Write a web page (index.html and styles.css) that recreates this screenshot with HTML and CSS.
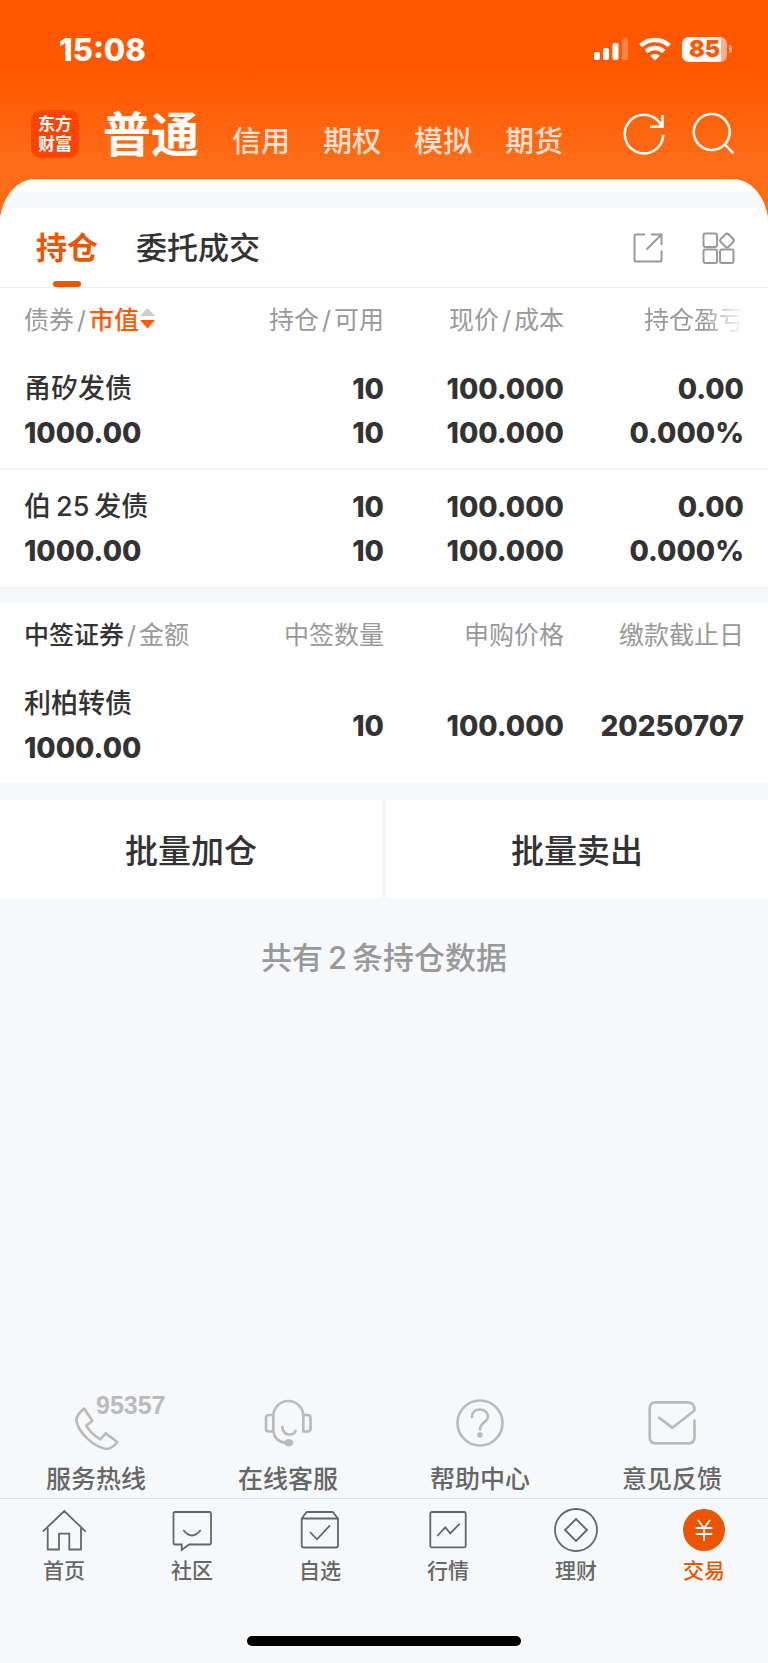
FILE: index.html
```html
<!DOCTYPE html>
<html lang="zh-CN">
<head>
<meta charset="utf-8">
<meta name="viewport" content="width=device-width, initial-scale=1">
<title>交易 - 持仓</title>
<link rel="stylesheet" href="styles.css">
</head>
<body>
<header class="top">
  <div class="status">
    <time class="clock">15:08</time>
    <div class="status-icons">
      <svg class="signal" viewBox="0 0 34 24" aria-hidden="true"><g fill="#fff"><rect x="0" y="15" width="6" height="8" rx="2"/><rect x="9" y="11" width="6" height="12" rx="2"/><rect x="18.500" y="6" width="6" height="17" rx="2"/><rect x="28" y="1" width="6" height="22" rx="2" opacity=".25"/></g></svg>
      <svg class="wifi" viewBox="0 0 32 24" aria-hidden="true"><g fill="none" stroke="#fff" stroke-width="4.500"><path d="M1.800 8.600A20.500 20.500 0 0 1 30.200 8.600"/><path d="M7.200 14.500A13 13 0 0 1 24.800 14.500"/></g><path d="M16 23.500L11.300 18.800A6.600 6.600 0 0 1 20.700 18.800Z" fill="#fff"/></svg>
      <span class="battery"><span class="battery-body">85</span><span class="battery-tip"></span></span>
    </div>
  </div>
  <div class="bar">
    <span class="logo">东方<br>财富</span>
    <nav class="accounts" aria-label="账户">
      <a class="account current" href="#normal">普通</a>
      <a class="account" href="#credit">信用</a>
      <a class="account" href="#option">期权</a>
      <a class="account" href="#demo">模拟</a>
      <a class="account" href="#futures">期货</a>
    </nav>
    <div class="tools">
      <button type="button" aria-label="刷新"><svg class="icon-44" viewBox="0 0 44 44"><path d="M41.300 23A19.300 19.300 0 1 1 39.300 13.500M40.500 3V14.700H28"/></svg></button>
      <button type="button" aria-label="搜索"><svg class="icon-44" viewBox="0 0 44 44"><circle cx="21.700" cy="20" r="18"/><path d="M34.400 32L43.300 41.300"/></svg></button>
    </div>
  </div>
</header>

<main class="sheet">
  <div class="strip"></div>
  <div class="tabs">
    <a class="tab active" href="#holding">持仓</a>
    <a class="tab" href="#orders">委托成交</a>
    <div class="tab-tools">
      <button type="button" aria-label="分享"><svg class="share" viewBox="0 0 30 30"><path d="M12 1.500H3Q1.500 1.500 1.500 3V27Q1.500 28.500 3 28.500H27Q28.500 28.500 28.500 27V17.500M18 1.500H28.500V12M28.500 1.500L13.500 16.500"/></svg></button>
      <button type="button" aria-label="更多"><svg class="grid" viewBox="0 0 34 32"><rect x="1.500" y="1.500" width="13.500" height="13.500" rx="2"/><rect x="1.500" y="17.500" width="13.500" height="13.500" rx="2"/><rect x="18" y="17.500" width="13.500" height="13.500" rx="2"/><rect x="19.500" y="3" width="11" height="11" rx="2.500" transform="rotate(45 25 8.500)"/></svg></button>
    </div>
  </div>

  <table class="list">
    <thead>
      <tr>
        <th scope="col">债券<span class="slash">/</span><button type="button" class="sort">市值<svg class="arrows" viewBox="0 0 15 22" aria-hidden="true"><path d="M7.500 1L15 9H0Z" fill="#ccc"/><path d="M7.500 21.500L0 13H15Z" fill="#ff5a0a"/></svg></button></th>
        <th scope="col">持仓<span class="slash">/</span>可用</th>
        <th scope="col">现价<span class="slash">/</span>成本</th>
        <th scope="col"><span class="fade">持仓盈亏</span></th>
      </tr>
    </thead>
    <tbody>
      <tr>
        <td><span class="name">甬矽发债</span><br>1000.00</td>
        <td>10<br>10</td>
        <td>100.000<br>100.000</td>
        <td>0.00<br>0.000%</td>
      </tr>
      <tr>
        <td><span class="name">伯<span class="num">25</span>发债</span><br>1000.00</td>
        <td>10<br>10</td>
        <td>100.000<br>100.000</td>
        <td>0.00<br>0.000%</td>
      </tr>
    </tbody>
  </table>

  <table class="list">
    <thead>
      <tr>
        <th scope="col"><span class="strong">中签证券</span><span class="slash">/</span>金额</th>
        <th scope="col">中签数量</th>
        <th scope="col">申购价格</th>
        <th scope="col">缴款截止日</th>
      </tr>
    </thead>
    <tbody>
      <tr>
        <td><span class="name">利柏转债</span><br>1000.00</td>
        <td>10</td>
        <td>100.000</td>
        <td>20250707</td>
      </tr>
    </tbody>
  </table>

  <div class="batch">
    <button type="button">批量加仓</button>
    <button type="button">批量卖出</button>
  </div>
  <p class="count">共有<span class="num">2</span>条持仓数据</p>
</main>

<section class="service" aria-label="服务">
  <a href="#hotline"><span class="pic"><svg viewBox="0 0 48 48"><path d="M12.300 9.700L20.300 21.700L14.300 26.700Q19 35 28.300 40.300L33.700 34.300L45.300 43Q40 50 34.700 50C22 48 6 34 4.300 21Q5 15 12.300 9.700Z"/></svg><span class="phone">95357</span></span>服务热线</a>
  <a href="#online"><span class="pic"><svg viewBox="0 0 48 48"><path d="M9.300 32V17A15 15 0 0 1 39.300 17V32.500M9.300 32Q10.500 42 21 43.700M9.300 16H5Q2 16 2 19V29.500Q2 32.500 5 32.500H9.300M39.300 16H43.500Q46.500 16 46.500 19V29.500Q46.500 32.500 43.500 32.500H39.300M18.300 28Q19 35.500 25.500 35.500Q30.500 35.500 31.500 32"/><ellipse class="solid" cx="24.700" cy="43.700" rx="4.700" ry="3.700"/></svg></span>在线客服</a>
  <a href="#help"><span class="pic"><svg viewBox="0 0 48 48"><circle cx="24" cy="24" r="22.500"/><path d="M16 18C16 13 19.500 10.500 24 10.500C28.500 10.500 32 13.500 32 17.500C32 23 24 23.500 24 30.500"/><circle class="solid" cx="24" cy="36" r="2.700"/></svg></span>帮助中心</a>
  <a href="#feedback"><span class="pic"><svg viewBox="0 0 48 48"><path d="M46.500 21.500V38.300Q46.500 44.300 40.500 44.300H7.700Q1.700 44.300 1.700 38.300V9.300Q1.700 3.300 7.700 3.300H39Q47 3.300 46.500 11.500L24.300 28.700L11 18.700"/></svg></span>意见反馈</a>
</section>

<nav class="tabbar" aria-label="主导航">
  <a href="#home"><svg viewBox="0 0 44 44"><path d="M.700 23.700L22.300 3L43.700 23.700M5.700 20V41.500H17V25.700H27.300V41.500H39V20"/></svg>首页</a>
  <a href="#community"><svg viewBox="0 0 44 44"><path d="M5 4H39.500Q41 4 41 5.500V35Q41 36.500 39.500 36.500H19L11.700 42V36.500H5Q3.500 36.500 3.500 35V5.500Q3.500 4 5 4ZM13.300 22Q22 33 30.700 22"/></svg>社区</a>
  <a href="#watch"><svg viewBox="0 0 44 44"><path d="M3.700 10.500H40V37.500Q40 39.500 38 39.500H5.700Q3.700 39.500 3.700 37.500V10.500L8.700 4H34.700L40 10.500M12 24L19 31.300L32 17.300"/></svg>自选</a>
  <a href="#market"><svg viewBox="0 0 44 44"><rect x="4.300" y="4" width="35.400" height="35.400" rx="1.500"/><path d="M11.300 28L19.300 19.300L24.300 25.300L33.700 15.700"/></svg>行情</a>
  <a href="#wealth"><svg viewBox="0 0 44 44"><circle cx="22" cy="22" r="21"/><path d="M22 11L33 22L22 33L11 22Z"/></svg>理财</a>
  <a class="on" href="#trade" aria-current="page"><svg viewBox="0 0 44 44"><circle class="disc" cx="22" cy="22" r="21"/><path d="M16 12L22 20.300L28 12M22 20V33M13.700 20H30.300M13.700 26H30.300"/></svg>交易</a>
</nav>
<div class="home-bar"><span></span></div>
</body>
</html>
```
FILE: styles.css
```css
* { box-sizing: border-box; }

body {
  margin: 0;
  min-height: 100vh;
  display: flex;
  flex-direction: column;
  background: #f7f8fa;
  color: #333;
  font-family: Inter, "Noto Sans CJK SC", sans-serif;
}

a { color: inherit; text-decoration: none; }

button {
  margin: 0;
  padding: 0;
  border: 0;
  background: none;
  color: inherit;
  font: inherit;
  cursor: pointer;
}

svg { display: block; fill: none; overflow: visible; }

.num { margin: 0 5px; }

/* Header */
.top {
  padding-bottom: 66px;
  background: linear-gradient(#ff5800 72px, #ff6d18 164px);
  color: #fff;
}

.status {
  display: flex;
  align-items: center;
  justify-content: space-between;
  height: 98px;
  padding: 0 36px 0 59px;
}

.clock { font-size: 31px; font-weight: 800; }

.status-icons { display: flex; align-items: center; gap: 11px; }
.signal { width: 34px; height: 24px; }
.wifi { width: 32px; height: 24px; }
.battery { display: flex; align-items: center; gap: 2px; }

.battery-body {
  width: 45px;
  border-radius: 7px;
  background: linear-gradient(90deg, #fff 86%, #ffb08a 86%);
  color: #ff5800;
  font-size: 23px;
  font-weight: 900;
  line-height: 25px;
  text-align: center;
}

.battery-tip {
  width: 3px;
  height: 8px;
  border-radius: 0 3px 3px 0;
  background: #ffa67c;
}

.bar {
  display: flex;
  align-items: center;
  height: 60px;
  padding: 12px 34px 0 31px;
}

.logo {
  width: 48px;
  padding: 4px 0;
  border-radius: 10px;
  background: #ff4400;
  font-size: 17px;
  font-weight: 700;
  line-height: 20px;
  text-align: center;
}

.accounts {
  display: flex;
  align-items: baseline;
  gap: 33px;
  margin-left: 24px;
  padding-top: 2px;
  line-height: 1;
}

.account { color: #ffe0d0; font-size: 29px; font-weight: 500; }
.account.current { color: #fff; font-size: 48px; font-weight: 700; }

.tools { display: flex; gap: 24px; margin-left: auto; }
.icon-44 { width: 44px; height: 44px; stroke: #fff; stroke-width: 2.5; }

/* Content sheet */
.sheet {
  margin-top: -45px;
  border-radius: 36px 36px 0 0 / 44px 44px 0 0;
  background: #f7f8fa;
  overflow: hidden;
}

.strip { height: 29px; border-top: 13px solid #fff; }

.tabs {
  display: flex;
  gap: 38px;
  height: 80px;
  padding: 0 32px 0 36px;
  border-bottom: 1px solid #eee;
  background: #fff;
  font-size: 31px;
  font-weight: 500;
  line-height: 79px;
}

.tab { position: relative; }
.tab.active { color: #ec5500; font-weight: 700; }

.tab.active::after {
  content: "";
  position: absolute;
  bottom: 0;
  left: 50%;
  width: 28px;
  height: 6px;
  margin-left: -14px;
  border-radius: 3px;
  background: #ec5500;
}

.tab-tools { display: flex; align-items: center; gap: 39px; margin-left: auto; }
.share { width: 30px; height: 30px; stroke: #999; stroke-width: 2; }
.grid { width: 34px; height: 32px; stroke: #999; stroke-width: 2; }

.list {
  width: 100%;
  margin-bottom: 15px;
  border-collapse: separate;
  border-spacing: 0;
  table-layout: fixed;
  background: #fff;
}

.list th,
.list td { padding: 0; text-align: right; white-space: nowrap; }

.list th {
  height: 64px;
  padding-bottom: 5px;
  color: #999;
  font-size: 25px;
  font-weight: 400;
}

.list th:first-child { width: 28%; }
.list th:nth-child(2) { width: 22%; }
.list th:nth-child(3) { width: 180px; }

.list td {
  padding: 14px 0 13px;
  border-bottom: 2px solid #f5f5f6;
  font-size: 28px;
  font-weight: 800;
  line-height: 44px;
}

.list tr > :first-child { padding-left: 24px; text-align: left; }
.list tr > :last-child { padding-right: 24px; }

.name { font-size: 27px; font-weight: 500; }
.slash { margin: 0 3px; }
.strong { color: #333; font-weight: 500; }

.sort {
  display: inline-flex;
  align-items: center;
  gap: 1px;
  color: #ff5a0a;
  font-weight: 500;
}

.arrows { width: 15px; height: 22px; }

.fade {
  -webkit-mask-image: linear-gradient(90deg, #000 60%, transparent);
  mask-image: linear-gradient(90deg, #000 60%, transparent);
}

.batch { display: grid; grid-template-columns: 1fr 1fr; gap: 4px; }

.batch button {
  height: 98px;
  background: #fff;
  font-size: 33px;
  font-weight: 500;
}

.count {
  margin: 0;
  padding: 36px 0;
  color: #999;
  font-size: 31px;
  font-weight: 500;
  line-height: 48px;
  text-align: center;
}

/* Service links */
.service {
  display: grid;
  grid-template-columns: repeat(4, 1fr);
  margin-top: auto;
  padding-bottom: 1px;
  color: #666;
  font-size: 25px;
  font-weight: 500;
  line-height: 36px;
}

.service a { display: flex; flex-direction: column; align-items: center; gap: 14px; }
.pic { position: relative; }

.pic svg {
  width: 48px;
  height: 48px;
  stroke: #bbb;
  stroke-width: 2.7;
  stroke-linecap: round;
  stroke-linejoin: round;
}

.solid { fill: #bbb; stroke: none; }

.phone {
  position: absolute;
  top: -8px;
  left: 24px;
  color: #bbb;
  font-family: "Liberation Sans", sans-serif;
  font-size: 25px;
  font-weight: 700;
  line-height: 28px;
}

/* Bottom navigation */
.tabbar {
  display: grid;
  grid-template-columns: repeat(6, 1fr);
  padding-top: 9px;
  border-top: 1px solid #e0e0e2;
  color: #666;
  font-size: 21px;
  font-weight: 500;
  line-height: 28px;
}

.tabbar a { display: flex; flex-direction: column; align-items: center; gap: 5px; }
.tabbar svg { width: 44px; height: 44px; stroke: #666; stroke-width: 1.8; }
.tabbar .on { color: #ec5500; }
.tabbar .on svg { stroke: #fff; }
.tabbar .disc { fill: #ec5500; stroke: none; }

.home-bar { display: flex; justify-content: center; padding: 51px 0 17px; }
.home-bar span { width: 274px; height: 10px; border-radius: 5px; background: #000; }
```
